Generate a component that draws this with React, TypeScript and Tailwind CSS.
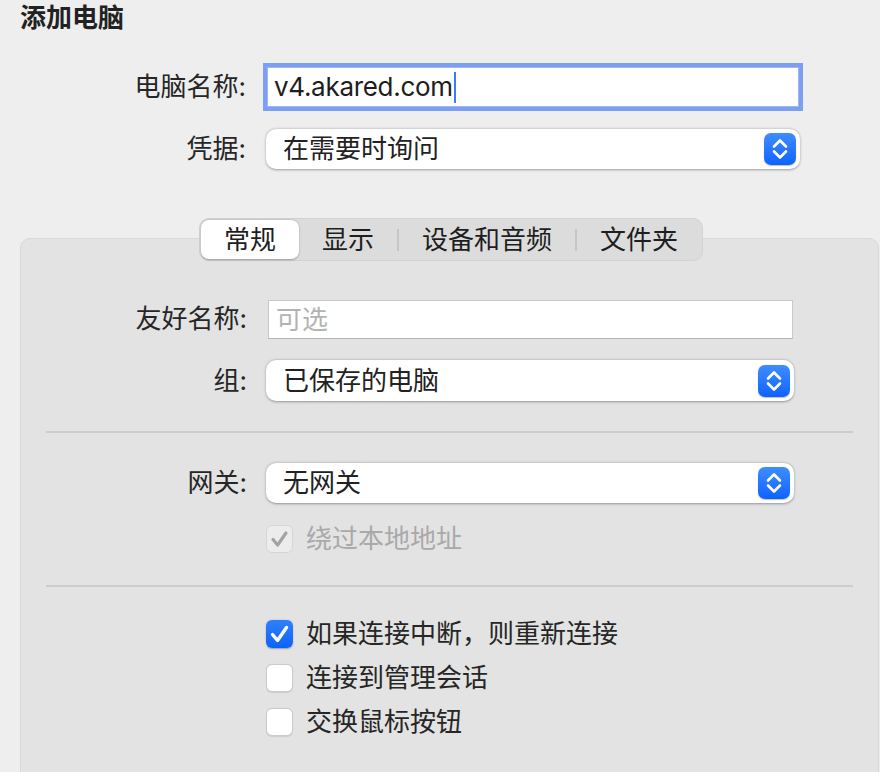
import type { ReactNode } from "react";

function Stepper() {
  return (
    <div className="flex h-[32px] w-[32px] items-center justify-center rounded-[7px] bg-gradient-to-b from-[#3f8cff] to-[#0b62ff] shadow-[0_0.5px_1px_rgba(0,0,0,0.25)]">
      <svg width="32" height="32" viewBox="0 0 32 32" fill="none">
        <path d="M10 13.5 L16 7.5 L22 13.5" stroke="white" strokeWidth="2.6" strokeLinecap="round" strokeLinejoin="round" />
        <path d="M10 18.5 L16 24.5 L22 18.5" stroke="white" strokeWidth="2.6" strokeLinecap="round" strokeLinejoin="round" />
      </svg>
    </div>
  );
}

function Popup({ value, width }: { value: string; width: string }) {
  return (
    <div
      className={`flex h-[40px] items-center justify-between rounded-[10px] bg-white pl-[17px] pr-[4px] shadow-[0_0.5px_2.5px_rgba(0,0,0,0.35)] ${width}`}
    >
      <span className="text-[26px] leading-[40px] text-[#222]">{value}</span>
      <Stepper />
    </div>
  );
}

function Row({ label, labelW, children }: { label: string; labelW: string; children: ReactNode }) {
  return (
    <div className="flex items-center">
      <div className={`shrink-0 text-right text-[26px] leading-[40px] text-[#262626] ${labelW}`}>{label}</div>
      {children}
    </div>
  );
}

function Check({ checked, disabled }: { checked?: boolean; disabled?: boolean }) {
  if (checked && !disabled) {
    return (
      <div className="flex h-[28px] w-[27px] items-center justify-center rounded-[6px] bg-gradient-to-b from-[#2f80ff] to-[#0a62f5] shadow-[0_0.5px_1.5px_rgba(0,0,0,0.3)]">
        <svg width="27" height="28" viewBox="0 0 27 28" fill="none">
          <path d="M6.5 14.5 L11.5 20.5 L20.5 7.5" stroke="white" strokeWidth="3.4" strokeLinecap="round" strokeLinejoin="round" />
        </svg>
      </div>
    );
  }
  if (disabled) {
    return (
      <div className="flex h-[28px] w-[27px] items-center justify-center rounded-[6px] border border-[#d6d6d6] bg-[#ececec]">
        <svg width="27" height="28" viewBox="0 0 27 28" fill="none">
          <path d="M6.5 14.5 L11.5 20.5 L20.5 7.5" stroke="#a3a3a3" strokeWidth="3.4" strokeLinecap="round" strokeLinejoin="round" />
        </svg>
      </div>
    );
  }
  return <div className="h-[28px] w-[27px] rounded-[6px] border border-[#cbcbcb] bg-white shadow-[0_0.5px_1px_rgba(0,0,0,0.1)]" />;
}

function CheckRow({ label, checked, disabled }: { label: string; checked?: boolean; disabled?: boolean }) {
  return (
    <div className="flex h-[28px] items-center pl-[245px]">
      <Check checked={checked} disabled={disabled} />
      <span className={`ml-[13px] text-[26px] leading-[28px] ${disabled ? "text-[#a9a9a9]" : "text-[#262626]"}`}>
        {label}
      </span>
    </div>
  );
}

const tabs = ["常规", "显示", "设备和音频", "文件夹"];

export default function App() {
  return (
    <div className="h-[772px] w-[880px] overflow-hidden bg-[#eeeeee] font-['Inter','Noto_Sans_CJK_SC',sans-serif]">
      <div className="h-[36px] pl-[20px] text-[26px] font-bold leading-[36px] text-[#222]">添加电脑</div>

      <div className="mt-[31px] flex flex-col gap-[22px]">
        <Row label="电脑名称:" labelW="w-[246px] mr-[21px]">
          <div className="flex h-[40px] w-[532px] items-center border border-[#9fb6f0] bg-white pl-[6px] shadow-[0_0_0_4px_#7c9ff2]">
            <span className="text-[26px] leading-[36px] tracking-[-0.3px] text-[#1d1d1d]">v4.akared.com</span>
            <span className="ml-[1px] h-[31px] w-[2.5px] bg-[#3d7bf6]" />
          </div>
        </Row>
        <Row label="凭据:" labelW="w-[246px] mr-[20px]">
          <Popup value="在需要时询问" width="w-[534px]" />
        </Row>
      </div>

      <div className="ml-[20px] mr-[1px] mt-[69px] h-[600px] rounded-t-[10px] border border-[#d8d8d8] bg-[#e3e3e3]">
        <div className="-mt-[21px] flex justify-center pl-[3px]">
          <div className="flex h-[43px] items-center rounded-[10px] border border-[#d2d2d2] bg-[#dcdcdc] p-[1px]">
            {tabs.map((t, i) => (
              <div key={t} className="flex items-center">
                {i > 1 && <div className="h-[22px] w-[2px] bg-[#c6c6c6]" />}
                <div
                  className={`flex h-[39px] items-center px-[23px] text-[26px] leading-[39px] text-[#1e1e1e] ${
                    i === 0 ? "rounded-[8px] bg-white shadow-[0_0.5px_2px_rgba(0,0,0,0.3)]" : ""
                  }`}
                >
                  {t}
                </div>
              </div>
            ))}
          </div>
        </div>

        <div className="mt-[38px]">
          <Row label="友好名称:" labelW="w-[226px] mr-[21px]">
            <div className="flex h-[39px] w-[525px] items-center border border-[#c9c9c9] border-b-[#b5b5b5] bg-white pl-[7px] text-[26px] text-[#b3b3b3]">
              可选
            </div>
          </Row>
        </div>
        <div className="mt-[21px]">
          <Row label="组:" labelW="w-[226px] mr-[19px]">
            <Popup value="已保存的电脑" width="w-[528px] h-[41px]" />
          </Row>
        </div>

        <div className="mx-[25px] mt-[30px] h-[2px] bg-[#cdcdcd]" />

        <div className="mt-[30px]">
          <Row label="网关:" labelW="w-[226px] mr-[19px]">
            <Popup value="无网关" width="w-[528px]" />
          </Row>
        </div>

        <div className="mt-[22px]">
          <CheckRow label="绕过本地地址" checked disabled />
        </div>

        <div className="mx-[25px] mt-[32px] h-[2px] bg-[#cdcdcd]" />

        <div className="mt-[33px] flex flex-col gap-[16px]">
          <CheckRow label="如果连接中断，则重新连接" checked />
          <CheckRow label="连接到管理会话" />
          <CheckRow label="交换鼠标按钮" />
        </div>
      </div>
    </div>
  );
}
